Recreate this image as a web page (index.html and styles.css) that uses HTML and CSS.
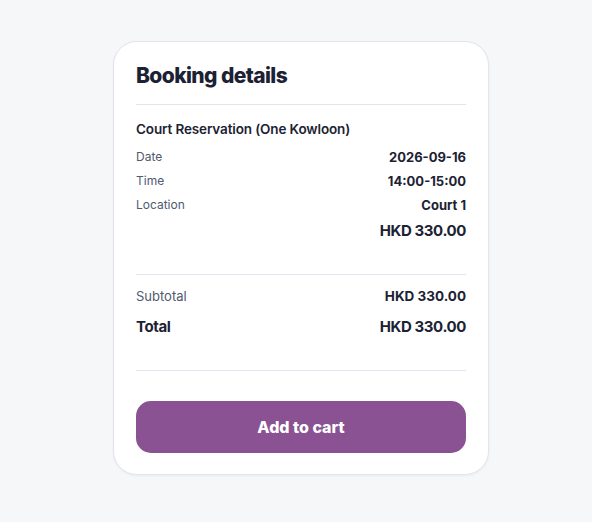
FILE: index.html
```html
<!DOCTYPE html>
<html>
<head>
<meta charset="utf-8">
<link rel="stylesheet" href="styles.css">
</head>
<body>
<div class="card">
  <div class="header"><h2 class="title">Booking details</h2></div>
  <div class="items">
    <div class="item-name">Court Reservation (One Kowloon)</div>
    <div class="row"><span class="label small">Date</span><span class="value">2026-09-16</span></div>
    <div class="row"><span class="label small">Time</span><span class="value">14:00-15:00</span></div>
    <div class="row"><span class="label small">Location</span><span class="value">Court 1</span></div>
    <div class="price">HKD 330.00</div>
  </div>
  <div class="summary">
    <div class="row"><span class="label">Subtotal</span><span class="value">HKD 330.00</span></div>
    <div class="row total"><span>Total</span><span>HKD 330.00</span></div>
  </div>
  <div class="actions">
    <button class="btn">Add to cart</button>
  </div>
</div>
</body>
</html>
```

FILE: styles.css
```css
html, body {
  margin: 0;
  padding: 0;
  background: #f6f7f9;
  font-family: Inter, "Noto Sans", sans-serif;
  color: #1c2233;
}
body {
  padding: 41px 0 0 113px;
  min-height: 522px;
  box-sizing: border-box;
}
.card {
  width: 376px;
  box-sizing: border-box;
  background: #fff;
  border: 1px solid #e2e5ee;
  border-radius: 24px;
  box-shadow: 0 1px 3px rgba(20, 30, 60, 0.05);
  padding: 20px 22px 21px;
}
.header {
  padding-bottom: 14px;
  border-bottom: 1px solid #e2e5ee;
}
.title {
  margin: 0;
  font-size: 21px;
  line-height: 28px;
  font-weight: 800;
  letter-spacing: -0.6px;
}
.items {
  padding: 14px 0 29px;
  border-bottom: 1px solid #e2e5ee;
}
.item-name {
  font-size: 13.5px;
  line-height: 20px;
  font-weight: 600;
  letter-spacing: -0.13px;
  margin-bottom: 6px;
}
.row {
  display: flex;
  justify-content: space-between;
  font-size: 13px;
  line-height: 24px;
  height: 24px;
}
.label {
  color: #4f5a6e;
}
.label.small {
  font-size: 12px;
}
.value {
  font-weight: 700;
}
.price {
  text-align: right;
  font-size: 15px;
  line-height: 28px;
  font-weight: 700;
  letter-spacing: -0.4px;
}
.summary {
  padding: 9px 0 31px;
  border-bottom: 1px solid #e2e5ee;
}
.summary .row .value {
  font-size: 13.5px;
}
.row.total {
  margin-top: 7px;
  font-size: 15px;
  font-weight: 700;
  letter-spacing: -0.4px;
}
.actions {
  padding-top: 30px;
}
.btn {
  display: block;
  width: 100%;
  height: 52px;
  border: none;
  border-radius: 15px;
  background: #8a5293;
  color: #fff;
  font-family: Inter, "Noto Sans", sans-serif;
  font-size: 16px;
  font-weight: 800;
  cursor: pointer;
}
```
